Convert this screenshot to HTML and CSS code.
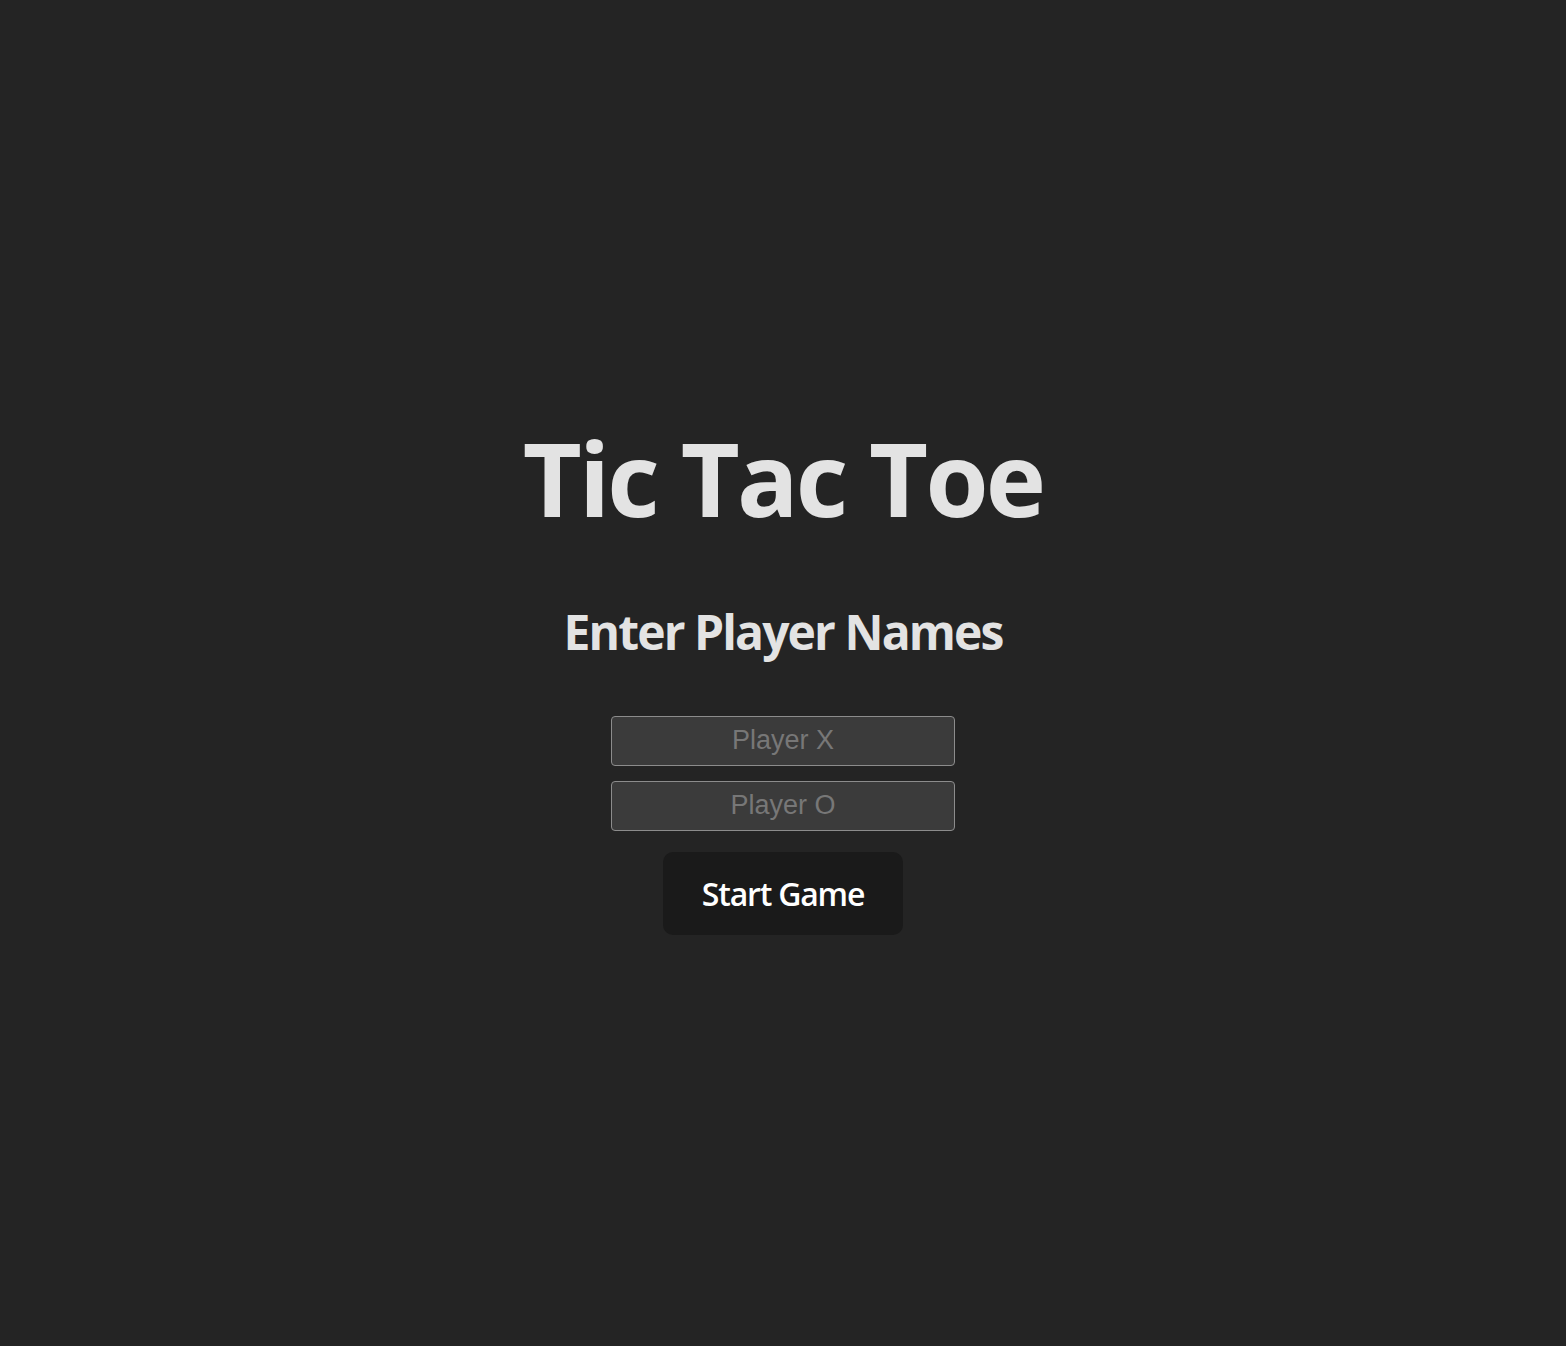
FILE: index.html
```html
<!DOCTYPE html>
<html lang="en">
<head>
<meta charset="utf-8">
<title>Tic Tac Toe</title>
<link rel="stylesheet" href="styles.css">
</head>
<body>
<main class="app">
  <h1 class="title">Tic Tac Toe</h1>
  <h2 class="subtitle">Enter Player Names</h2>
  <form class="setup">
    <input class="name-input" type="text" placeholder="Player X">
    <input class="name-input" type="text" placeholder="Player O">
    <button class="start-btn" type="button">Start Game</button>
  </form>
</main>
</body>
</html>
```

FILE: styles.css
```css
html, body {
  margin: 0;
  padding: 0;
}
body {
  background: #242424;
  color: rgba(255, 255, 255, 0.87);
  font-family: "Open Sans", "Noto Sans", sans-serif;
  min-height: 100vh;
}
.app {
  display: flex;
  flex-direction: column;
  align-items: center;
  padding-top: 422px;
}
.title {
  margin: 0;
  font-size: 102px;
  line-height: 112px;
  font-weight: 700;
  letter-spacing: -2.8px;
  color: #e3e3e3;
}
.subtitle {
  margin: 66px 0 0;
  font-size: 48px;
  line-height: 64px;
  font-weight: 700;
  letter-spacing: -1.9px;
  color: #e3e3e3;
}
.setup {
  margin-top: 52px;
  display: flex;
  flex-direction: column;
  align-items: center;
}
.name-input {
  box-sizing: border-box;
  width: 344px;
  height: 50px;
  margin: 0 0 15px;
  padding: 0 8px 2px;
  background: #3b3b3b;
  border: 1px solid #8c8c8c;
  border-radius: 4px;
  color: #e3e3e3;
  font-family: "Liberation Sans", Arial, sans-serif;
  font-size: 27px;
  text-align: center;
  outline: none;
}
.name-input::placeholder {
  color: #777777;
}
.setup .name-input:nth-of-type(2) {
  margin-bottom: 21px;
}
.start-btn {
  box-sizing: border-box;
  width: 240px;
  height: 83px;
  background: #1a1a1a;
  border: 1px solid transparent;
  border-radius: 10px;
  color: #ffffff;
  font-family: "Open Sans", "Noto Sans", sans-serif;
  font-size: 32px;
  font-weight: 600;
  letter-spacing: -1.2px;
  padding: 0;
  cursor: pointer;
}
```
